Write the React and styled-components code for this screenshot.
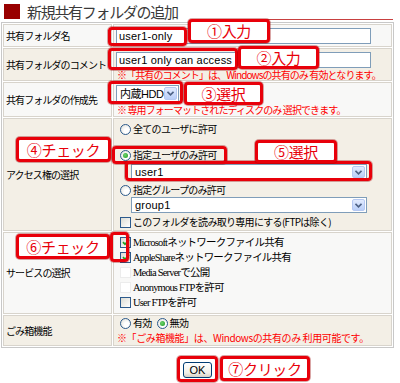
import React from "react";
import styled, { createGlobalStyle, css } from "styled-components";

const GlobalStyle = createGlobalStyle`
  * { box-sizing: border-box; }
  body {
    margin: 0;
    background: #fff;
    font-family: "Noto Sans CJK JP", sans-serif;
    color: #000;
  }
`;

const JP = `"Noto Sans CJK JP", sans-serif`;
const LATIN = `"Liberation Sans", "Noto Sans CJK JP", sans-serif`;

const Page = styled.div`
  position: relative;
  width: 400px;
  height: 383px;
  overflow: hidden;
`;

const Header = styled.div`
  display: flex;
  align-items: flex-start;
  height: 22px;
  padding: 4px 0 0 4px;
`;

const Square = styled.div`
  width: 16px;
  height: 15px;
  background: #990000;
`;

const Title = styled.h1`
  margin: 0 0 0 7px;
  font-family: ${JP};
  font-size: 15px;
  font-weight: normal;
  line-height: 16px;
  letter-spacing: -1.3px;
  color: #3a3a3a;
`;

const HeaderLine = styled.div`
  flex: 1;
  height: 16px;
  margin: 0 7px 0 20px;
  border-bottom: 1px solid transparent;
  border-image: linear-gradient(to right, rgba(200, 60, 60, 0), #c84040 20px, #c84040) 1;
`;

const Form = styled.table`
  margin-left: 1px;
  width: 393px;
  table-layout: fixed;
  border: 1px solid #c8c8c8;
  border-spacing: 1px;
  background: #fff;
`;

const Label = styled.td`
  width: 109px;
  height: ${(p) => p.$h}px;
  padding: 0 0 0 2px;
  border: 1px solid #d8d4cc;
  background: ${(p) => (p.$alt ? "#f3efe6" : "#f8f8f7")};
  vertical-align: middle;
  font-size: 10px;
  line-height: 12px;
  letter-spacing: -0.9px;
  white-space: nowrap;
`;

const Value = styled.td`
  height: ${(p) => p.$h}px;
  padding: ${(p) => p.$pad || "3px 0 0 1px"};
  border: 1px solid #d8d4cc;
  background: ${(p) => (p.$alt ? "#f3efe6" : "#f8f8f7")};
  vertical-align: top;
`;

const Stack = styled.div`
  display: flex;
  flex-direction: column;
  align-items: flex-start;
`;

const TextInput = styled.input`
  display: block;
  width: 255px;
  height: 16px;
  margin: 0 0 0 1px;
  padding: 0 2px;
  border: 1px solid #7f9db9;
  background: #fff;
  font-family: ${LATIN};
  font-size: 11px;
  letter-spacing: 0.2px;
  color: #000;
  outline: none;
`;

const Note = styled.div`
  margin-top: ${(p) => p.$mt || 0}px;
  margin-left: 2px;
  font-family: ${JP};
  font-size: 10px;
  line-height: 11px;
  letter-spacing: ${(p) => (p.$wide ? "-0.4px" : "-0.9px")};
  color: #f00;
  white-space: nowrap;
`;

const SelectBox = styled.div`
  display: flex;
  align-items: center;
  width: ${(p) => p.$w}px;
  height: ${(p) => p.$h || 16}px;
  margin-top: ${(p) => p.$mt || 0}px;
  margin-left: ${(p) => p.$ml || 0}px;
  padding: 0 1px 0 3px;
  border: 1px solid #7f9db9;
  background: #fff;
  font-family: ${LATIN};
  font-size: 11px;
  line-height: 14px;
`;

const SelectText = styled.span`
  flex: 1;
  white-space: nowrap;
  letter-spacing: ${(p) => (p.$jp ? "-0.5px" : "0.2px")};
`;

const DropButton = styled.span`
  display: flex;
  align-items: center;
  justify-content: center;
  width: 13px;
  height: ${(p) => p.$h || 12}px;
  border: 1px solid #b5c8f2;
  border-radius: 2px;
  background: linear-gradient(#e2ebfe, #b9cef8);
`;

const Option = styled.label`
  display: flex;
  align-items: center;
  height: ${(p) => p.$h || 12}px;
  margin-top: ${(p) => p.$mt || 0}px;
  margin-left: ${(p) => p.$ml || 5}px;
  font-family: ${(p) => (p.$serif ? `"Liberation Serif", "Noto Sans CJK JP", serif` : JP)};
  font-size: ${(p) => (p.$serif ? "10.5px" : "10px")};
  letter-spacing: ${(p) => (p.$serif ? "-0.8px" : "-0.7px")};
  line-height: 12px;
  white-space: nowrap;
`;

const Inline = styled.div`
  display: flex;
  align-items: center;
  margin-top: ${(p) => p.$mt || 0}px;
`;

const Radio = styled.span`
  position: relative;
  flex: none;
  width: 11px;
  height: 11px;
  margin-right: 2px;
  border-radius: 50%;
  border: 1px solid #2c5a8c;
  background: radial-gradient(circle at 65% 65%, #fff 30%, #dcdcd4 100%);
  ${(p) =>
    p.$on &&
    css`
      &::after {
        content: "";
        position: absolute;
        left: 2px;
        top: 2px;
        width: 5px;
        height: 5px;
        border-radius: 50%;
        background: radial-gradient(circle at 40% 40%, #6fd36f, #1c9a1c);
      }
    `}
`;

const Box = styled.span`
  display: flex;
  align-items: center;
  justify-content: center;
  flex: none;
  width: 11px;
  height: 11px;
  margin-right: 2px;
  border: 1px solid ${(p) => (p.$off ? "#ececec" : "#2c5a8c")};
  background: ${(p) => (p.$off ? "#fff" : "linear-gradient(135deg, #dcdcd4, #fff)")};
`;

const Footer = styled.div`
  display: flex;
  justify-content: center;
  width: 395px;
  margin-top: 14px;
`;

const OkButton = styled.button`
  width: 29px;
  height: 16px;
  padding: 0;
  border: 1px solid #003c74;
  border-radius: 3px;
  background: linear-gradient(#ffffff, #f0efe8 70%, #d6d0c5);
  font-family: ${LATIN};
  font-size: 11px;
  line-height: 14px;
  color: #000;
`;

const Mark = styled.div`
  position: absolute;
  left: ${(p) => p.$x}px;
  top: ${(p) => p.$y}px;
  width: ${(p) => p.$w}px;
  height: ${(p) => p.$h}px;
  border: 3px solid #e8000a;
  border-radius: 4px;
  background: ${(p) => (p.$label ? "#fff" : "transparent")};
  box-shadow: 0 0 0 1px rgba(150, 0, 0, 0.35);
  display: flex;
  align-items: center;
  justify-content: center;
  font-family: ${JP};
  font-size: 15px;
  line-height: 16px;
  letter-spacing: -0.3px;
  color: #e8000a;
  white-space: nowrap;
`;

const Chevron = () => (
  <svg width="7" height="5" viewBox="0 0 7 5">
    <path d="M0.5 0.8 L3.5 3.8 L6.5 0.8" fill="none" stroke="#4d6185" strokeWidth="1.6" />
  </svg>
);

const Tick = () => (
  <svg width="8" height="7" viewBox="0 0 8 7">
    <path d="M1 3.2 L3 5.3 L7 1" fill="none" stroke="#21a121" strokeWidth="1.8" />
  </svg>
);

const Select = ({ children, jp, ...rest }) => (
  <SelectBox {...rest}>
    <SelectText $jp={jp}>{children}</SelectText>
    <DropButton $h={rest.$h ? rest.$h - 4 : 12}>
      <Chevron />
    </DropButton>
  </SelectBox>
);

const marks = [
  { x: 108, y: 27, w: 79, h: 19 },
  { x: 188, y: 19, w: 82, h: 24, text: "①入力" },
  { x: 108, y: 48, w: 130, h: 22 },
  { x: 238, y: 46, w: 81, h: 23, text: "②入力" },
  { x: 108, y: 81, w: 75, h: 23 },
  { x: 184, y: 82, w: 79, h: 23, text: "③選択" },
  { x: 16, y: 137, w: 95, h: 25, text: "④チェック" },
  { x: 112, y: 146, w: 115, h: 18 },
  { x: 125, y: 161, w: 247, h: 20 },
  { x: 255, y: 140, w: 82, h: 23, text: "⑤選択" },
  { x: 16, y: 234, w: 94, h: 25, text: "⑥チェック" },
  { x: 110, y: 232, w: 19, h: 30 },
  { x: 177, y: 356, w: 41, h: 26 },
  { x: 220, y: 356, w: 90, h: 25, text: "⑦クリック" },
];

const services = [
  { name: "Microsoftネットワークファイル共有", on: true },
  { name: "AppleShareネットワークファイル共有", on: true },
  { name: "Media Serverで公開", off: true },
  { name: "Anonymous FTPを許可", off: true },
  { name: "User FTPを許可" },
];

export default function App() {
  return (
    <Page>
      <GlobalStyle />
      <Header>
        <Square />
        <Title>新規共有フォルダの追加</Title>
        <HeaderLine />
      </Header>
      <Form>
        <tbody>
          <tr>
            <Label $h={23}>共有フォルダ名</Label>
            <Value $h={23}>
              <TextInput defaultValue="user1-only" />
            </Value>
          </tr>
          <tr>
            <Label $h={33} $alt>共有フォルダのコメント</Label>
            <Value $h={33} $alt>
              <TextInput defaultValue="user1 only can access" />
              <Note $mt={1}>※「共有のコメント」は、Windowsの共有のみ 有効となります。</Note>
            </Value>
          </tr>
          <tr>
            <Label $h={35}>共有フォルダの作成先</Label>
            <Value $h={35} $pad="2px 0 0 1px">
              <Select $w={63} $h={17} $ml={1} jp>
                内蔵HDD
              </Select>
              <Note $mt={2}>※ 専用フォーマットされたディスクのみ 選択できます。</Note>
            </Value>
          </tr>
          <tr>
            <Label $h={113} $alt>アクセス権の選択</Label>
            <Value $h={113} $alt $pad="4px 0 0 1px">
              <Stack>
                <Option>
                  <Radio />
                  全てのユーザに許可
                </Option>
                <Option $mt={14}>
                  <Radio $on />
                  指定ユーザのみ許可
                </Option>
                <Select $w={236} $mt={3} $ml={16}>
                  user1
                </Select>
                <Option $mt={4}>
                  <Radio />
                  指定グループのみ許可
                </Option>
                <Select $w={236} $mt={1} $ml={16}>
                  group1
                </Select>
                <Option $mt={3}>
                  <Box />
                  このフォルダを読み取り専用にする(FTPは除く)
                </Option>
              </Stack>
            </Value>
          </tr>
          <tr>
            <Label $h={82}>サービスの選択</Label>
            <Value $h={82} $pad="2px 0 0 1px">
              <Stack>
                {services.map((s) => (
                  <Option key={s.name} $h={15} $serif>
                    <Box $off={s.off}>{s.on && <Tick />}</Box>
                    {s.name}
                  </Option>
                ))}
              </Stack>
            </Value>
          </tr>
          <tr>
            <Label $h={31} $alt>ごみ箱機能</Label>
            <Value $h={31} $alt $pad="1px 0 0 1px">
              <Inline>
                <Option>
                  <Radio />
                  有効
                </Option>
                <Option $ml={5}>
                  <Radio $on />
                  無効
                </Option>
              </Inline>
              <Note $wide $mt={3}>※「ごみ箱機能」は、Windowsの共有のみ 利用可能です。</Note>
            </Value>
          </tr>
        </tbody>
      </Form>
      <Footer>
        <OkButton type="button">OK</OkButton>
      </Footer>
      {marks.map((m, i) => (
        <Mark key={i} $x={m.x} $y={m.y} $w={m.w} $h={m.h} $label={!!m.text}>
          {m.text}
        </Mark>
      ))}
    </Page>
  );
}
